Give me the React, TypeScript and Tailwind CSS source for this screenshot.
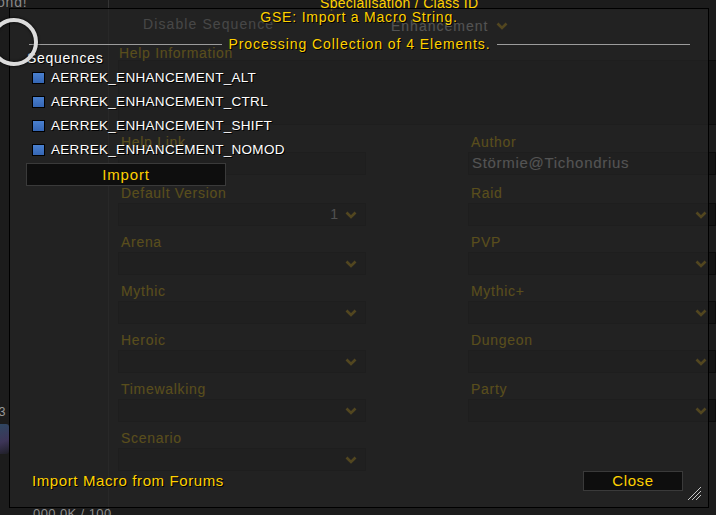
import React from "react";

const labelText =
  "text-[14px] leading-[19px] h-[19px] pl-[3px] tracking-[0.7px] text-[#ffd100]";
const fieldBox =
  "h-[23px] border border-[#0c0c0c] bg-[#141414] flex items-center justify-end pr-[8px]";
const gold = "text-[#ffd100] [text-shadow:1px_1px_0_#000]";

function Chevron() {
  return (
    <svg width="12" height="8" viewBox="0 0 12 8">
      <path
        d="M1.5 1.5 L6 6 L10.5 1.5"
        fill="none"
        stroke="#e0b010"
        strokeWidth="2.6"
      />
    </svg>
  );
}

function Field({
  label,
  value,
  dropdown = true,
  text,
  className = "mb-[7px]",
}: {
  label: string;
  value?: string;
  dropdown?: boolean;
  text?: string;
  className?: string;
}) {
  return (
    <div className={className}>
      <div className={labelText}>{label}</div>
      {dropdown ? (
        <div className={fieldBox}>
          {value && (
            <span className="mr-[7px] text-[14px] text-[#d8d8d8]">{value}</span>
          )}
          <Chevron />
        </div>
      ) : (
        <div className="h-[23px] border border-[#0c0c0c] bg-[#141414] flex items-center pl-[3px] text-[15px] tracking-[0.7px] text-[#e8e8e8]">
          {text}
        </div>
      )}
    </div>
  );
}

const sequences = [
  "AERREK_ENHANCEMENT_ALT",
  "AERREK_ENHANCEMENT_CTRL",
  "AERREK_ENHANCEMENT_SHIFT",
  "AERREK_ENHANCEMENT_NOMOD",
];

function ResizeGrip() {
  return (
    <svg width="15" height="15" viewBox="0 0 15 15">
      <path d="M1 14 L14 1" stroke="#c8c8c8" strokeWidth="1" />
      <path d="M5 14 L14 5" stroke="#c8c8c8" strokeWidth="1" />
      <path d="M9 14 L14 9" stroke="#c8c8c8" strokeWidth="1" />
    </svg>
  );
}

export default function App() {
  return (
    <div className="relative w-[716px] h-[515px] overflow-hidden bg-[#1c1c1c] font-['Liberation_Sans',Arial,sans-serif]">
      {/* editor window behind the import dialog */}
      <div className="flex h-full">
        <aside className="w-[109px] shrink-0 border-r border-[#343434] flex flex-col">
          <span className="shrink-0 -mt-[6px] -ml-[3px] text-[14px] leading-[16px] tracking-[0.8px] text-[#8a8a8a]">
            ond!
          </span>
          <span className="shrink-0 mt-[394px] -ml-[8px] text-[12px] leading-[16px] text-[#9a9a9a]">
            83
          </span>
          <div className="shrink-0 mt-[4px] -ml-[9px] w-[18px] h-[30px] rounded-[3px] bg-[linear-gradient(160deg,#2c4a63,#3d3558_60%,#1e1e26)]" />
          <span className="shrink-0 mt-[52px] ml-[33px] whitespace-nowrap text-[13px] leading-[16px] tracking-[0.4px] text-[#8c8c8c]">
            000.0K / 100
          </span>
        </aside>

        <main className="flex-1 pl-[9px]">
          <div className="flex h-[46px]">
            <div className="w-[202px] pl-[25px] pt-[16px] text-[14px] leading-[16px] tracking-[1.1px] text-[#b4b4b4]">
              Disable Sequence
            </div>
            <div className="flex flex-col -mt-[5px]">
              <span className="text-[14px] leading-[16px] tracking-[0.3px] text-[#ffd100]">
                Specialisation / Class ID
              </span>
              <div className="ml-[71px] mt-[7px] flex items-center gap-[8px]">
                <span className="text-[14px] leading-[16px] tracking-[1px] text-[#e4e4e4]">
                  Enhancement
                </span>
                <Chevron />
              </div>
            </div>
          </div>

          <div className="pl-[1px] h-[14px] text-[14px] leading-[14px] tracking-[0.7px] text-[#ffd100]">
            Help Information
          </div>
          <div className="h-[65px] w-[600px] border border-[#0c0c0c] bg-[#141414]" />

          <div className="mt-[8px] grid grid-cols-[248px_248px] gap-x-[102px]">
            <Field label="Help Link" dropdown={false} className="mb-[9px]" />
            <Field
              label="Author"
              dropdown={false}
              text="Störmie@Tichondrius"
              className="mb-[9px]"
            />
            <Field label="Default Version" value="1" />
            <Field label="Raid" />
            <Field label="Arena" />
            <Field label="PVP" />
            <Field label="Mythic" />
            <Field label="Mythic+" />
            <Field label="Heroic" />
            <Field label="Dungeon" />
            <Field label="Timewalking" />
            <Field label="Party" />
            <Field label="Scenario" />
          </div>
        </main>
      </div>

      {/* import dialog */}
      <div className="absolute left-[9px] top-[8px] w-[700px] h-[500px] border border-black bg-[#252525]/[0.76] flex flex-col">
        <h1 className={`h-[16px] text-center text-[14px] leading-[16px] tracking-[0.8px] ${gold}`}>
          GSE: Import a Macro String.
        </h1>
        <div className="mt-[11px] ml-[19px] mr-[18px] h-[16px] flex items-center gap-[6px]">
          <div className="h-px flex-1 bg-[#9c9c9c]" />
          <span className={`text-[14px] leading-[16px] tracking-[0.95px] ${gold}`}>
            Processing Collection of 4 Elements.
          </span>
          <div className="h-px flex-1 bg-[#9c9c9c]" />
        </div>
        <div className="-mt-[2px] ml-[17px] h-[16px] text-[14px] leading-[16px] tracking-[0.7px] text-white [text-shadow:1px_1px_0_#000]">
          Sequences
        </div>
        <ul>
          {sequences.map((s) => (
            <li key={s} className="h-[24px] pl-[22px] flex items-center gap-[6px]">
              <span className="w-[13px] h-[12px] border border-black bg-[linear-gradient(#4a80cf,#3566b4)]" />
              <span className="text-[13.5px] leading-[16px] tracking-[0.3px] text-white [text-shadow:1px_1px_0_#000]">
                {s}
              </span>
            </li>
          ))}
        </ul>
        <button className="mt-[1px] ml-[16px] w-[200px] h-[23px] border border-[#3a3a3a] bg-[#0e0e0e] text-[15px] tracking-[0.8px] text-[#ffd100]">
          Import
        </button>

        <div className="mt-auto mb-[16px] h-[20px] flex items-center">
          <span className={`ml-[22px] text-[15px] leading-[16px] tracking-[0.6px] ${gold}`}>
            Import Macro from Forums
          </span>
          <button className="ml-auto mr-[25px] w-[100px] h-[20px] border border-[#3a3a3a] bg-[#0e0e0e] text-[15px] leading-[18px] tracking-[0.6px] text-[#ffd100]">
            Close
          </button>
        </div>
        <div className="absolute right-[6px] bottom-[6px]">
          <ResizeGrip />
        </div>
      </div>

      {/* cursor ring */}
      <div className="absolute left-[-10px] top-[18px] w-[48px] h-[48px] rounded-full border-[4px] border-[#dcdcdc] shadow-[0_0_3px_#000,inset_0_0_3px_#000]" />
    </div>
  );
}
